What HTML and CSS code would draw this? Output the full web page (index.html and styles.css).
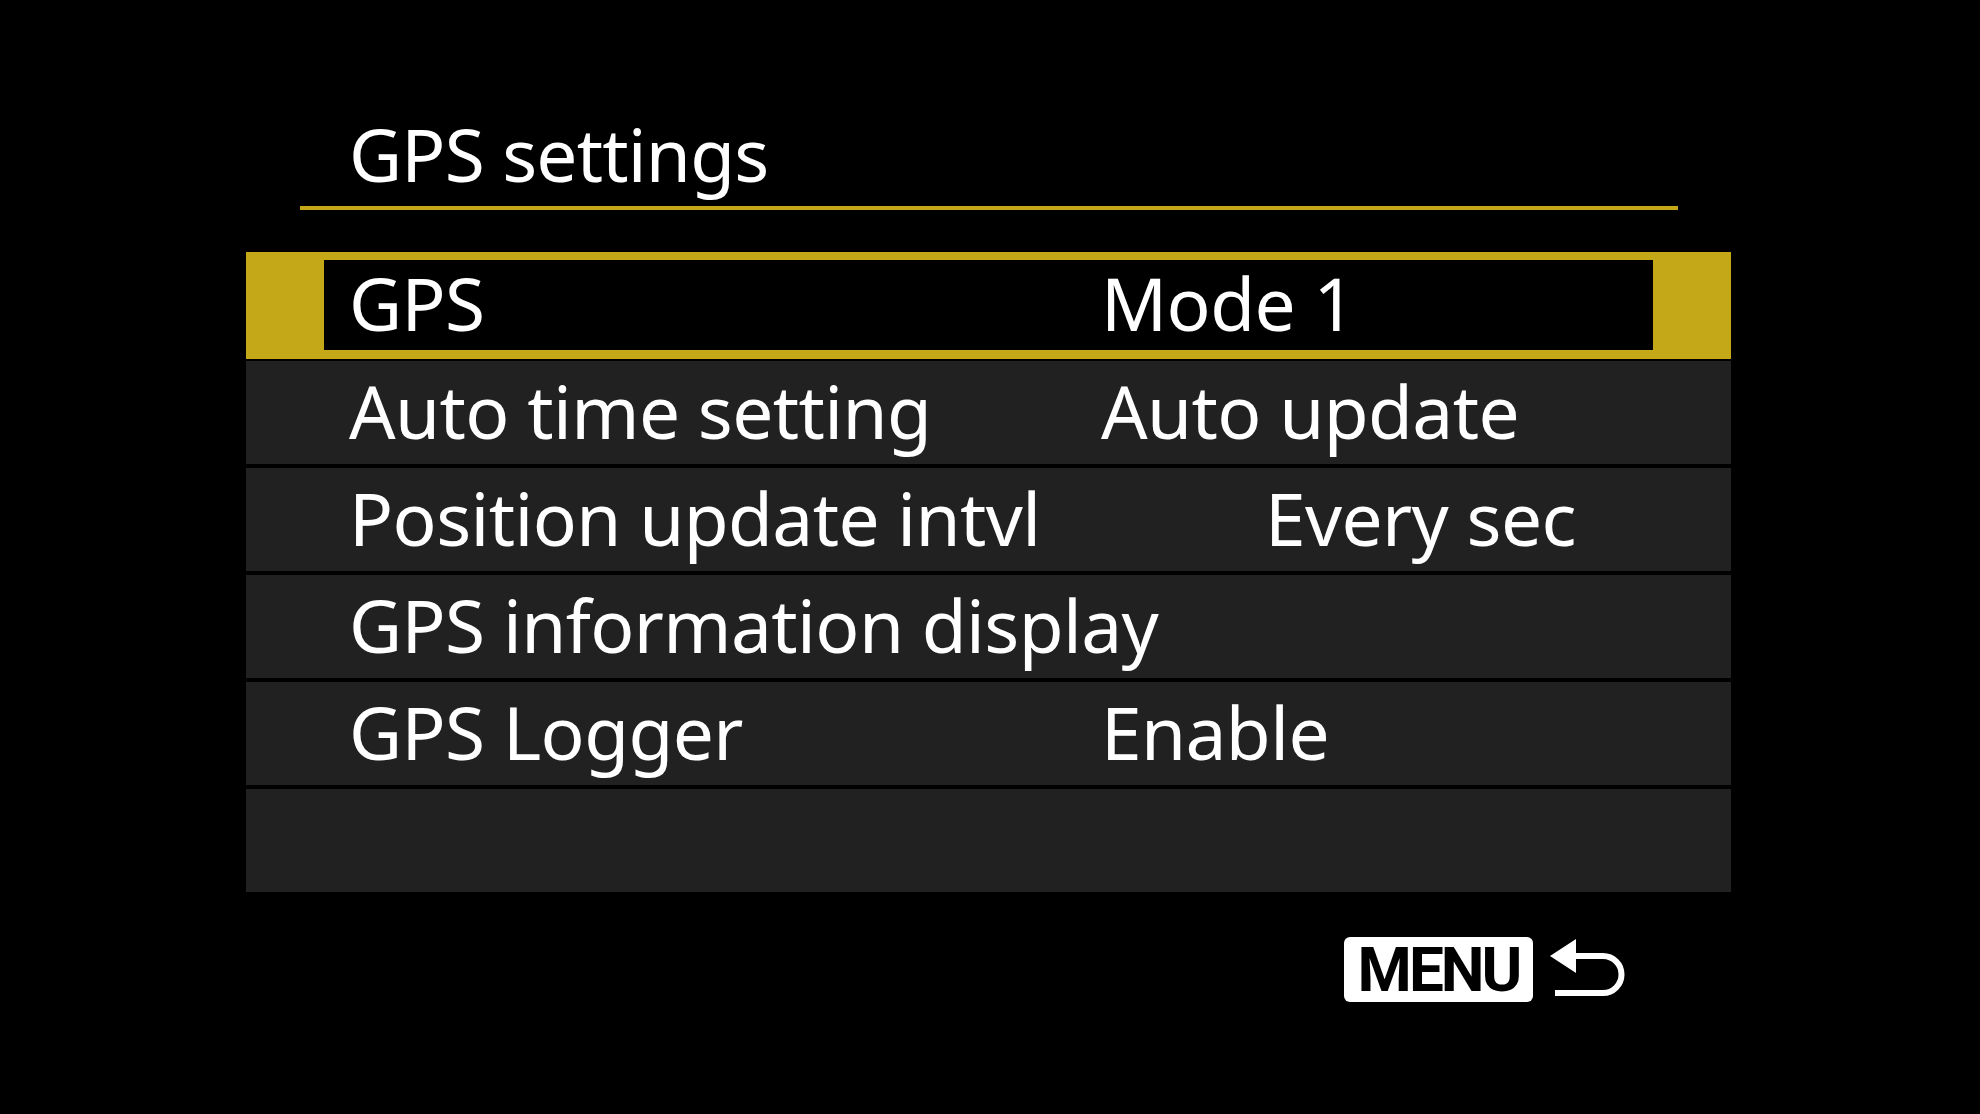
FILE: index.html
```html
<!DOCTYPE html>
<html lang="en">
<head>
    <meta charset="UTF-8">
    <meta name="viewport" content="width=device-width, initial-scale=1.0">
    <title>GPS settings</title>
    <link rel="stylesheet" href="styles.css">
</head>
<body>
    <div class="screen">
        <div class="title">GPS settings</div>
        <ul class="menu">
            <li class="row selected">
                <div class="row-inner">
                    <span class="label">GPS</span>
                    <span class="value">Mode 1</span>
                </div>
            </li>
            <li class="row">
                <span class="label">Auto time setting</span>
                <span class="value">Auto update</span>
            </li>
            <li class="row">
                <span class="label">Position update intvl</span>
                <span class="value shifted">Every sec</span>
            </li>
            <li class="row">
                <span class="label">GPS information display</span>
                <span class="value"></span>
            </li>
            <li class="row">
                <span class="label">GPS Logger</span>
                <span class="value">Enable</span>
            </li>
            <li class="row"></li>
        </ul>
        <div class="footer">
            <span class="menu-btn">MENU</span>
            <svg class="back-icon" width="78" height="68" viewBox="0 0 78 68">
                <polygon points="3,21 29,4 29,38" fill="#fff"/>
                <path d="M27 21 H56 A18.5 18.5 0 0 1 56 58 H8" fill="none" stroke="#fff" stroke-width="6"/>
            </svg>
        </div>
    </div>
</body>
</html>
```

FILE: styles.css
```css
* {
    margin: 0;
    padding: 0;
    box-sizing: border-box;
}
body {
    background-color: #000;
    color: #fff;
    font-family: "Noto Sans", "Open Sans", sans-serif;
}
.screen {
    width: 1980px;
    height: 1114px;
    padding-top: 114px;
}
.title {
    margin-left: 300px;
    width: 1378px;
    padding: 0 0 12px 49px;
    font-size: 73px;
    line-height: 80px;
    letter-spacing: -0.8px;
    border-bottom: 4px solid #c4a817;
}
.menu {
    list-style: none;
    margin: 42px 0 0 246px;
    width: 1485px;
    display: flex;
    flex-direction: column;
    gap: 4px;
}
.row {
    height: 103px;
    background: #212121;
    display: grid;
    grid-template-columns: 752px 1fr;
    padding-left: 103px;
    font-size: 73px;
    line-height: 99px;
    letter-spacing: -0.6px;
    white-space: nowrap;
}
.row.selected {
    display: block;
    height: 107px;
    margin-bottom: -2px;
    padding: 8px 78px 9px;
    background: #c4a817;
}
.row-inner {
    height: 90px;
    background: #000;
    display: grid;
    grid-template-columns: 752px 1fr;
    padding-left: 25px;
    line-height: 86px;
}
.value.shifted {
    padding-left: 164px;
}
.footer {
    margin-top: 43px;
    padding-left: 1344px;
    display: flex;
    align-items: center;
    gap: 14px;
}
.menu-btn {
    width: 189px;
    height: 65px;
    background: #fff;
    color: #000;
    border-radius: 6px;
    font-family: Roboto, sans-serif;
    font-weight: 700;
    font-size: 62px;
    line-height: 65px;
    letter-spacing: -3px;
    text-align: center;
}
.back-icon {
    display: block;
}
```
